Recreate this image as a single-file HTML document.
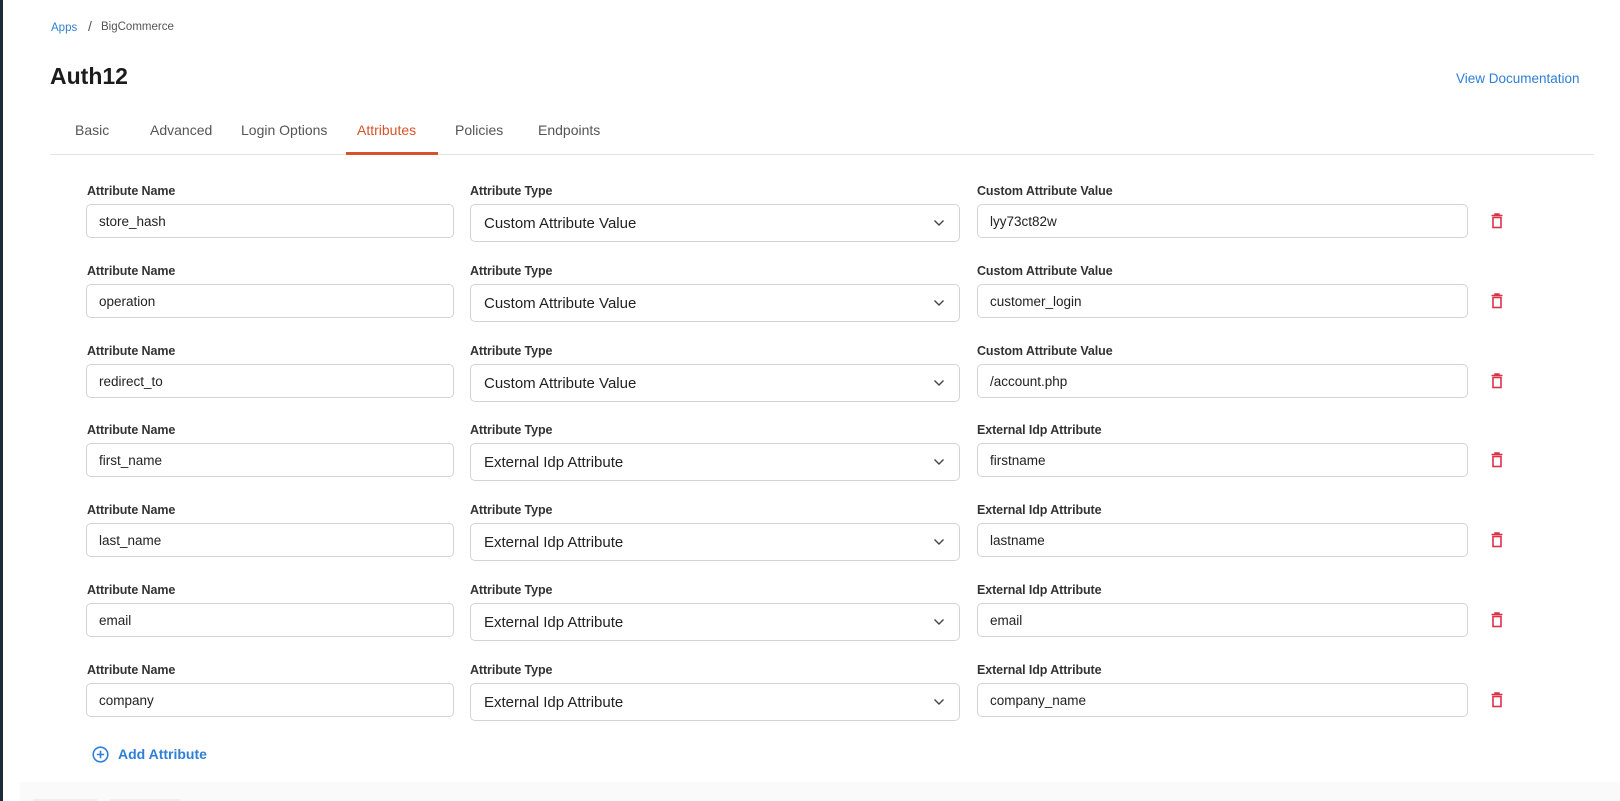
<!DOCTYPE html>
<html><head><meta charset="utf-8"><style>
*{box-sizing:border-box;margin:0;padding:0}
body{width:1620px;height:801px;background:#fff;font-family:"Liberation Sans",sans-serif;color:#222;position:relative;overflow:hidden}
.lb{position:absolute;left:0;top:0;width:3px;height:801px;background:#1e2a36}
.a{position:absolute;white-space:nowrap}
.tab{position:absolute;top:122px;font-size:14px;color:#555}
.lbl{position:absolute;font-size:12.5px;font-weight:bold;color:#333;letter-spacing:-0.1px}
.in{position:absolute;border:1px solid #d4d4d4;border-radius:5px;background:#fff;font-size:13.5px;color:#222;padding-left:12px;display:flex;align-items:center}
.sel{font-size:15px;padding-left:13px}
.chev{position:absolute;right:14px;top:50%;margin-top:-4px}
.tr{position:absolute}
</style></head><body>
<div class="lb"></div>
<div class="a" style="left:51px;top:22px;font-size:11.5px;color:#2f7fd8">Apps</div>
<div class="a" style="left:88px;top:18px;font-size:14px;color:#555">/</div>
<div class="a" style="left:101px;top:21px;font-size:11.5px;color:#555">BigCommerce</div>
<div class="a" style="left:50px;top:63px;font-size:23px;font-weight:bold;color:#1c1c1c">Auth12</div>
<div class="a" style="left:1456px;top:71px;font-size:13.5px;color:#2f7fd8">View Documentation</div>
<div class="tab" style="left:75px">Basic</div>
<div class="tab" style="left:150px">Advanced</div>
<div class="tab" style="left:241px">Login Options</div>
<div class="tab" style="left:357px;color:#d8532b">Attributes</div>
<div class="tab" style="left:455px">Policies</div>
<div class="tab" style="left:538px">Endpoints</div>
<div class="a" style="left:50px;top:154px;width:1544px;height:1px;background:#e3e3e3"></div>
<div class="a" style="left:346px;top:152px;width:92px;height:3px;background:#d8532b"></div>
<div id="rows"></div>
<svg class="a" style="left:92px;top:746px" width="17" height="17" viewBox="0 0 17 17"><circle cx="8.5" cy="8.5" r="7.3" fill="none" stroke="#2f7fd8" stroke-width="1.6"/><path d="M8.5 4.8v7.4M4.8 8.5h7.4" stroke="#2f7fd8" stroke-width="1.6"/></svg>
<div class="a" style="left:118px;top:746px;font-size:14px;font-weight:bold;color:#2f7fd8">Add Attribute</div>
<div class="a" style="left:20px;top:782px;width:1600px;height:19px;background:#fafafa"></div>
<div class="a" style="left:33px;top:799px;width:64px;height:2px;background:#eee"></div>
<div class="a" style="left:110px;top:799px;width:70px;height:2px;background:#eee"></div>
<script>
var d=[["store_hash","Custom Attribute Value","lyy73ct82w"],["operation","Custom Attribute Value","customer_login"],["redirect_to","Custom Attribute Value","/account.php"],["first_name","External Idp Attribute","firstname"],["last_name","External Idp Attribute","lastname"],["email","External Idp Attribute","email"],["company","External Idp Attribute","company_name"]];
var h="";
d.forEach(function(r,i){var t=Math.round(181+i*79.8);
var lab=r[1];
h+='<div class="lbl" style="left:87px;top:'+(t+3)+'px">Attribute Name</div>';
h+='<div class="lbl" style="left:470px;top:'+(t+3)+'px">Attribute Type</div>';
h+='<div class="lbl" style="left:977px;top:'+(t+3)+'px">'+lab+'</div>';
h+='<div class="in" style="left:86px;top:'+(t+23)+'px;width:368px;height:34px">'+r[0]+'</div>';
h+='<div class="in sel" style="left:470px;top:'+(t+23)+'px;width:490px;height:38px">'+r[1]+'<svg class="chev" width="12" height="8" viewBox="0 0 12 8"><path d="M1.5 1.5l4.5 4.5 4.5-4.5" fill="none" stroke="#444" stroke-width="1.4"/></svg></div>';
h+='<div class="in" style="left:977px;top:'+(t+23)+'px;width:491px;height:34px">'+r[2]+'</div>';
h+='<svg class="tr" style="left:1491px;top:'+(t+32)+'px" width="12" height="16" viewBox="0 0 12 16"><path d="M0.5 2.5h11M4 2.5V1h4v1.5" fill="none" stroke="#d9334a" stroke-width="1.5"/><rect x="2" y="4.5" width="8" height="10" fill="none" stroke="#d9334a" stroke-width="1.6"/></svg>';
});
document.getElementById("rows").innerHTML=h;
</script>
</body></html>
